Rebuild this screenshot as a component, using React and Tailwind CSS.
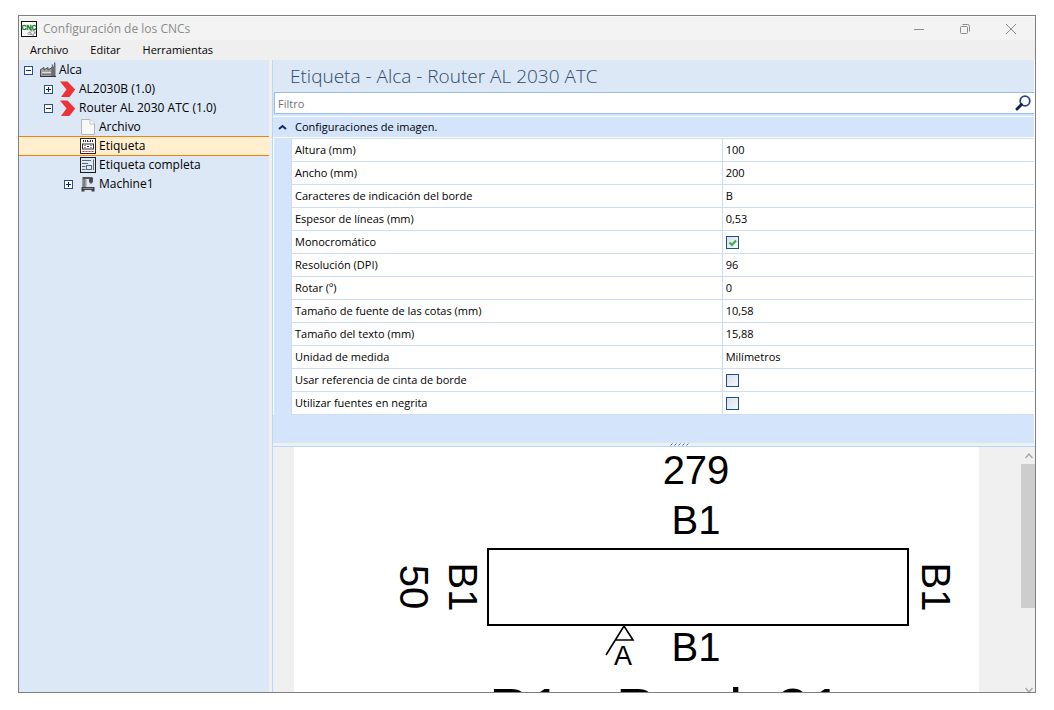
import React, { useState } from 'react';
import clsx from 'clsx';

const TREE = [
  { id: 'alca', label: 'Alca', level: 0, icon: 'factory', toggle: 'open' },
  { id: 'al2030b', label: 'AL2030B (1.0)', level: 1, icon: 'arrow', toggle: 'closed' },
  { id: 'router', label: 'Router AL 2030 ATC (1.0)', level: 1, icon: 'arrow', toggle: 'open' },
  { id: 'archivo', label: 'Archivo', level: 2, icon: 'file' },
  { id: 'etiqueta', label: 'Etiqueta', level: 2, icon: 'label' },
  { id: 'completa', label: 'Etiqueta completa', level: 2, icon: 'fullLabel' },
  { id: 'machine1', label: 'Machine1', level: 2, icon: 'machine', toggle: 'closed' },
];

const PROPERTIES = [
  { id: 'altura', label: 'Altura (mm)', value: '100' },
  { id: 'ancho', label: 'Ancho (mm)', value: '200' },
  { id: 'borde', label: 'Caracteres de indicación del borde', value: 'B' },
  { id: 'espesor', label: 'Espesor de líneas (mm)', value: '0,53' },
  { id: 'mono', label: 'Monocromático', value: true },
  { id: 'dpi', label: 'Resolución (DPI)', value: '96' },
  { id: 'rotar', label: 'Rotar (º)', value: '0' },
  { id: 'cotas', label: 'Tamaño de fuente de las cotas (mm)', value: '10,58' },
  { id: 'texto', label: 'Tamaño del texto (mm)', value: '15,88' },
  { id: 'unidad', label: 'Unidad de medida', value: 'Milímetros' },
  { id: 'cinta', label: 'Usar referencia de cinta de borde', value: false },
  { id: 'negrita', label: 'Utilizar fuentes en negrita', value: false },
];

const LEVEL_PADDING = ['pl-[5px]', 'pl-[25px]', 'pl-[45px]'];

// ── Icons ───────────────────────────────────────────────────────────────────
const AppIcon = () => (
  <svg className="w-4 h-4 shrink-0" viewBox="0 0 16 16">
    <rect x="0.5" y="0.5" width="15" height="15" fill="#fff" stroke="#111" />
    <circle cx="11.5" cy="11.5" r="2.2" fill="none" stroke="#9a9a9a" strokeWidth="2" strokeDasharray="1.4 0.5" />
    <circle cx="8" cy="12.5" r="1.2" fill="none" stroke="#a5a5a5" />
    <text x="8" y="9" textAnchor="middle" fontFamily="Liberation Sans" fontWeight="bold" fontSize="7" fill="#0a7a1c" stroke="#0a7a1c" strokeWidth="0.3">
      CNC
    </text>
  </svg>
);

const ICONS = {
  factory: (
    <>
      <path d="M0.5 7.5 L4 5.5 V8 L8 5.5 V8 L12 5.5 V14.5 H0.5 Z" fill="#a3a3a3" stroke="#4f4f4f" />
      <path d="M12 4.5 H15.5 V14.5 H12 Z" fill="#6d6d6d" />
      <path d="M12.5 5 V2.5 M14.7 5 V0.5" stroke="#666" strokeWidth="1.4" />
      <path d="M2 10.5 H11" stroke="#dcdcdc" />
      <path d="M2 12.5 H11" stroke="#777" />
      <path d="M0 14.5 H16" stroke="#333" />
    </>
  ),
  arrow: <path d="M0 0.5 H7.5 L15.2 8.5 L9.5 16 H1 L6.5 8.5 Z" fill="#ee3338" />,
  file: (
    <>
      <path d="M1.5 0.5 H10 L14.5 5 V15.5 H1.5 Z" fill="#f8f8f8" stroke="#b5b5b5" />
      <path d="M10 0.5 V5 H14.5" fill="#fff" stroke="#c4c4c4" />
    </>
  ),
  label: (
    <>
      <rect x="0.5" y="0.5" width="15" height="15" fill="#fff" stroke="#2d2626" />
      <path d="M3.5 2 V4 M5.5 2 V4 M7.5 2 V4 M8.5 3.5 H9.5 M10.5 2 V4 M12.5 2 V4" stroke="#3c2a2a" />
      <rect x="2.5" y="6" width="11" height="5" fill="none" stroke="#333" />
      <path d="M4.5 7.5 H5.5 M4.5 9.5 H5.5 M7 8.5 H9 M10.5 7.5 H11.5 M10.5 9.5 H11.5" stroke="#222" />
      <path d="M2.5 13.5 H13.5" stroke="#d02020" strokeDasharray="2 1" />
    </>
  ),
  fullLabel: (
    <>
      <rect x="0.5" y="0.5" width="15" height="15" fill="#dce8f6" stroke="#1b1b1b" />
      <path d="M2 3.5 H11 M2 6.5 H8 M2 9.5 H5.5 M2 12.5 H5.5" stroke="#5f6670" />
      <path d="M13.5 2.5 V13" stroke="#5f6670" />
      <rect x="6.5" y="8.5" width="5" height="4" fill="none" stroke="#5f6670" />
    </>
  ),
  machine: (
    <>
      <path d="M2.5 1 H12.5 V3 H5.5 V12 H2.5 Z" fill="#555" />
      <path d="M4 3 V11" stroke="#a9a9a9" />
      <path d="M6.5 3.5 V10.5" stroke="#b5bcc6" />
      <path d="M9 2 H13 V6.5 H12 L11 8.5 L10 6.5 H9 Z" fill="#4d4d4d" />
      <path d="M1.5 11 H14.5 V15.5 H11.5 V14 H4.5 V15.5 H1.5 Z" fill="#3f3f3f" />
      <path d="M3 12.5 H13" stroke="#8f8f8f" />
    </>
  ),
};

const TreeIcon = ({ name }) => (
  <svg className="w-4 h-4 shrink-0" viewBox="0 0 16 16">{ICONS[name]}</svg>
);

const Expander = ({ state }) => (
  <svg className="w-[9px] h-[9px] shrink-0" viewBox="0 0 9 9" shapeRendering="crispEdges">
    {state && (
      <>
        <rect x="0.5" y="0.5" width="8" height="8" fill="#fff" stroke="#27508b" />
        <path d={state === 'open' ? 'M2 4.5 H7' : 'M2 4.5 H7 M4.5 2 V7'} stroke="#16265c" />
      </>
    )}
  </svg>
);

const SearchIcon = () => (
  <svg className="w-4 h-4" viewBox="0 0 16 16" fill="none">
    <circle cx="10" cy="6" r="4.8" stroke="#27467c" strokeWidth="1.8" />
    <path d="M6.5 9.5 L2 14" stroke="#10244e" strokeWidth="3" strokeLinecap="round" />
  </svg>
);

// ── Window chrome ───────────────────────────────────────────────────────────
const TitleBar = () => (
  <header className="flex items-center h-6 pl-0.5 pr-px bg-[#f3f3f3] text-[#8c8c8c] border-t border-[#fafafa]">
    <AppIcon />
    <h1 className="ml-[6px] flex-1 text-[12px]">Configuración de los CNCs</h1>
    <button aria-label="Minimizar" className="w-[46px] h-6 flex items-center justify-center">
      <svg className="w-[10px] h-[10px]" viewBox="0 0 10 10"><path d="M0 5.5 H10" stroke="currentColor" /></svg>
    </button>
    <button aria-label="Restaurar" className="w-[46px] h-6 flex items-center justify-center">
      <svg className="w-[10px] h-[10px]" viewBox="0 0 10 10" fill="none" stroke="currentColor">
        <rect x="0.5" y="2.5" width="7" height="7" rx="1" />
        <path d="M2.5 0.5 H7.5 Q9.5 0.5 9.5 2.5 V7.5" />
      </svg>
    </button>
    <button aria-label="Cerrar" className="w-[46px] h-6 flex items-center justify-center">
      <svg className="w-[10px] h-[10px]" viewBox="0 0 10 10"><path d="M0 0 L10 10 M10 0 L0 10" stroke="currentColor" /></svg>
    </button>
  </header>
);

const MenuBar = () => (
  <nav className="flex h-5 bg-[#efefef] text-[11px] text-black">
    {['Archivo', 'Editar', 'Herramientas'].map((item) => (
      <button key={item} className="px-[11px]">{item}</button>
    ))}
  </nav>
);

const Sidebar = ({ selected, onSelect }) => (
  <aside className="w-[250px] shrink-0 bg-[#dce8f6]">
    <ul>
      {TREE.map((node) => (
        <li key={node.id} className="h-[19px]">
          <button
            onClick={() => onSelect(node.id)}
            className={clsx(
              'relative flex items-center w-full h-5 border-y text-[12px] whitespace-nowrap',
              LEVEL_PADDING[node.level],
              selected === node.id ? 'z-10 bg-[#ffefcf] border-[#f88012]' : 'border-transparent'
            )}
          >
            <Expander state={node.toggle} />
            <span className="ml-[7px] mr-[3px]"><TreeIcon name={node.icon} /></span>
            {node.label}
          </button>
        </li>
      ))}
    </ul>
  </aside>
);

// ── Property grid ───────────────────────────────────────────────────────────
const PropertyValue = ({ property, onChange }) => {
  if (typeof property.value !== 'boolean') return property.value;
  return (
    <span className="relative block w-[13px] h-[13px]">
      <input
        id={property.id}
        type="checkbox"
        checked={property.value}
        onChange={(e) => onChange(property.id, e.target.checked)}
        className="peer block appearance-none w-[13px] h-[13px] border border-[#1c5180] bg-linear-to-br from-[#d9dfea] to-[#f6f8fb]"
      />
      <svg className="hidden peer-checked:block absolute inset-0 w-[13px] h-[13px] pointer-events-none" viewBox="0 0 13 13">
        <path d="M3.5 6.5 L6 9 L10 4.5" fill="none" stroke="#3fae49" strokeWidth="2.2" />
      </svg>
    </span>
  );
};

const PropertyGrid = ({ properties, onChange }) => (
  <section className="text-[11px] text-black pb-7">
    <h3 className="mt-[2px] border-y border-white">
      <button className="flex items-center w-full h-5 pl-[5px]">
        <svg className="w-[9px] h-[6px] mr-2" viewBox="0 0 9 6">
          <path d="M1 5 L4.5 2 L8 5" fill="none" stroke="#10296b" strokeWidth="2" />
        </svg>
        Configuraciones de imagen.
      </button>
    </h3>
    <div className="pl-[17px] border-l border-white">
      <table className="w-full table-fixed border-collapse bg-white">
        <tbody>
          {properties.map((property) => (
            <tr key={property.id} className="h-[23px] border-y border-[#cbdef5]">
              <th scope="row" className="p-0 pl-[3px] text-left font-normal border-x border-[#cbdef5]">
                <label htmlFor={typeof property.value === 'boolean' ? property.id : undefined}>{property.label}</label>
              </th>
              <td className="w-[42%] p-0 pl-[3px]">
                <PropertyValue property={property} onChange={onChange} />
              </td>
            </tr>
          ))}
        </tbody>
      </table>
    </div>
  </section>
);

// ── Label preview ───────────────────────────────────────────────────────────
const LabelDrawing = () => (
  <svg className="block shrink-0 w-[685px] h-[378px] bg-white" viewBox="0 0 685 378" fontFamily="Liberation Sans, Arial, sans-serif" fontSize="40">
    <text x="402" y="37" textAnchor="middle">279</text>
    <text x="402" y="87" textAnchor="middle">B1</text>
    <rect x="194" y="102" width="420" height="76" fill="none" stroke="#000" strokeWidth="2" />
    <text transform="translate(106 140) rotate(90)" textAnchor="middle">50</text>
    <text transform="translate(155 140) rotate(90)" textAnchor="middle">B1</text>
    <text transform="translate(628 140) rotate(90)" textAnchor="middle">B1</text>
    <path d="M312 208 L330 179 L339 193 H321" fill="none" stroke="#000" strokeWidth="1.6" />
    <text x="329" y="218" textAnchor="middle" fontSize="27">A</text>
    <text x="402" y="214" textAnchor="middle">B1</text>
    <text x="195" y="283" fontSize="60">P1 - Prod. 21</text>
  </svg>
);

const Preview = () => (
  <section className="relative flex flex-1 min-h-0 overflow-hidden pl-[21px] bg-[#f0f0f0] border-t border-[#b9d7fd]">
    <LabelDrawing />
    <div className="absolute inset-y-0 right-0 w-[14px] overflow-hidden bg-[#f0f0f0]">
      <div className="flex justify-center h-[17px] pt-[6px] pl-[2px] text-[#a6a6a6]">
        <svg className="w-2 h-[6px]" viewBox="0 0 8 6"><path d="M0.5 5 L4 1 L7.5 5" fill="none" stroke="currentColor" strokeWidth="1.4" /></svg>
      </div>
      <div className="h-36 bg-[#cdcdcd]" />
      <svg className="absolute -bottom-px left-1 w-2 h-[6px] text-[#a6a6a6]" viewBox="0 0 8 6">
        <path d="M0.5 1 L4 5 L7.5 1" fill="none" stroke="currentColor" strokeWidth="1.4" />
      </svg>
    </div>
  </section>
);

export default function App() {
  const [selected, setSelected] = useState('etiqueta');
  const [filter, setFilter] = useState('');
  const [properties, setProperties] = useState(PROPERTIES);

  const handleChange = (id, value) => {
    setProperties((prev) => prev.map((p) => (p.id === id ? { ...p, value } : p)));
  };

  return (
    <div className="h-screen px-[18px] pt-[15px] pb-[17px] bg-white font-['Open_Sans',sans-serif]">
      <div className="flex flex-col h-full overflow-hidden border border-[#808080]">
        <TitleBar />
        <MenuBar />
        <div className="flex flex-1 min-h-0 bg-[#f0f0f0]">
          <Sidebar selected={selected} onSelect={setSelected} />
          <main className="flex flex-col flex-1 min-w-0 ml-[3px] border-l border-[#b9d7fd]">
            <h2 className="h-8 pl-[17px] bg-[#dce8f6] border-r border-white text-[19px] font-light leading-8 text-[#2f4a6b] whitespace-nowrap">
              Etiqueta - Alca - Router AL 2030 ATC
            </h2>
            <div className="bg-[#d4e5fb] border-r border-white">
              <form className="flex items-center h-[22px] ml-px bg-white border border-r-0 border-[#9bbdeb]" onSubmit={(e) => e.preventDefault()}>
                <input
                  type="text"
                  aria-label="Filtro"
                  placeholder="Filtro"
                  value={filter}
                  onChange={(e) => setFilter(e.target.value)}
                  className="flex-1 min-w-0 h-5 pl-[3px] text-[11px] text-black placeholder:text-[#757070] outline-none"
                />
                <button aria-label="Buscar" className="mr-[3px]"><SearchIcon /></button>
              </form>
              <PropertyGrid properties={properties} onChange={handleChange} />
            </div>
            {/* Splitter between the grid and the preview */}
            <div className="flex justify-center items-end h-[3px] pl-[50px] bg-[#f0f0f0]">
              <svg className="w-[19px] h-[3px]" viewBox="0 0 19 3">
                <path d="M0.5 2.5 L2.5 0.5 M4.5 2.5 L6.5 0.5 M8.5 2.5 L10.5 0.5 M12.5 2.5 L14.5 0.5 M16.5 2.5 L18.5 0.5" stroke="#2c63b8" strokeWidth="0.9" />
              </svg>
            </div>
            <Preview />
          </main>
        </div>
      </div>
    </div>
  );
}
